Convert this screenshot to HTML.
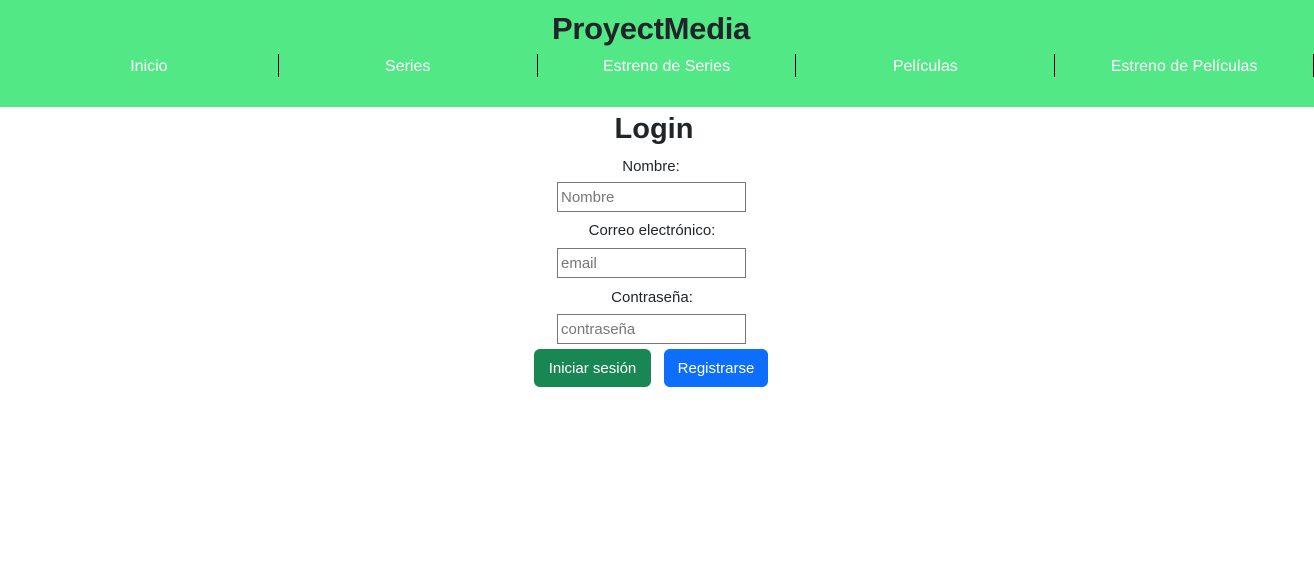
<!DOCTYPE html>
<html><head><meta charset="utf-8"><style>
*{box-sizing:border-box;margin:0;padding:0}
body{width:1314px;height:568px;background:#fff;font-family:"Liberation Sans",sans-serif;color:#212529;overflow:hidden}
header{background:#52e886;height:107px;position:relative}
h1{position:absolute;left:0;right:0;top:9px;text-align:center;font-size:31px;font-weight:700;line-height:40px;color:#212529;letter-spacing:-0.3px;padding-right:12px}
nav{position:absolute;left:20px;top:54px;display:flex}
nav a{width:258.8px;height:23px;border-right:1px solid #000;color:#fff;text-align:center;font-size:16px;line-height:25px;text-decoration:none}
h2{position:absolute;left:0;right:0;top:110px;text-align:center;font-size:29px;font-weight:700;line-height:38px;padding-right:6px}
.lbl{position:absolute;left:0;right:0;text-align:center;font-size:15px;line-height:22px}
.in{position:absolute;left:557px;width:189px;height:30px;border:1px solid #767676;font-size:15px;color:#777;padding-left:3px;line-height:30px}
.btn{position:absolute;top:349px;height:38px;border-radius:6px;color:#fff;font-size:15px;line-height:40px;text-align:center}
</style></head><body>
<header><h1>ProyectMedia</h1>
<nav><a>Inicio</a><a>Series</a><a>Estreno de Series</a><a>Películas</a><a>Estreno de Películas</a></nav></header>
<h2>Login</h2>
<div class="lbl" style="top:156px;padding-right:12px">Nombre:</div>
<div class="in" style="top:182px">Nombre</div>
<div class="lbl" style="top:220px;padding-right:10px">Correo electrónico:</div>
<div class="in" style="top:248px">email</div>
<div class="lbl" style="top:287px;padding-right:10px">Contraseña:</div>
<div class="in" style="top:314px">contraseña</div>
<div class="btn" style="left:534px;width:117px;background:#198754">Iniciar sesión</div>
<div class="btn" style="left:664px;width:104px;background:#0d6efd">Registrarse</div>
</body></html>
